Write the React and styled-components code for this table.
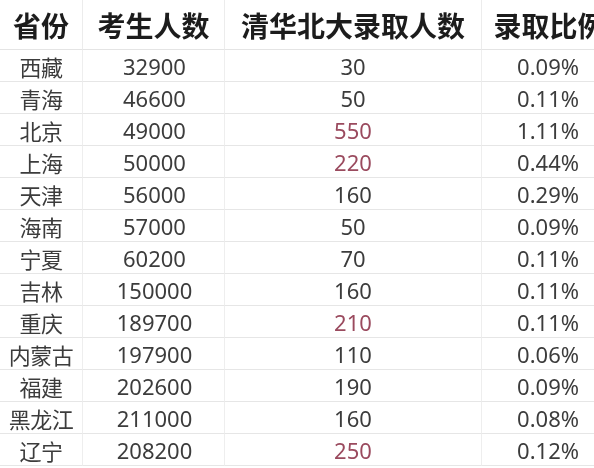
import React from "react";
import styled, { createGlobalStyle } from "styled-components";

const rows = [
  ["西藏", "32900", "30", "0.09%"],
  ["青海", "46600", "50", "0.11%"],
  ["北京", "49000", "550", "1.11%", true],
  ["上海", "50000", "220", "0.44%", true],
  ["天津", "56000", "160", "0.29%"],
  ["海南", "57000", "50", "0.09%"],
  ["宁夏", "60200", "70", "0.11%"],
  ["吉林", "150000", "160", "0.11%"],
  ["重庆", "189700", "210", "0.11%", true],
  ["内蒙古", "197900", "110", "0.06%"],
  ["福建", "202600", "190", "0.09%"],
  ["黑龙江", "211000", "160", "0.08%"],
  ["辽宁", "208200", "250", "0.12%", true],
];

const GlobalStyle = createGlobalStyle`
  html, body {
    margin: 0;
    padding: 0;
    background: #ffffff;
    overflow: hidden;
  }
`;

const Viewport = styled.div`
  width: 594px;
  height: 468px;
  overflow: hidden;
  background: #fff;
`;

const Sheet = styled.div`
  display: grid;
  grid-template-columns: 83px 142px 257px 136px;
  grid-template-rows: 50px;
  grid-auto-rows: 32px;
  width: 618px;
  font-family: "Noto Sans", "Noto Sans CJK SC", sans-serif;
  filter: blur(0.35px);
`;

const HeadCell = styled.div`
  box-sizing: border-box;
  display: flex;
  align-items: center;
  justify-content: center;
  font-family: "Noto Sans CJK SC", sans-serif;
  font-size: 28px;
  font-weight: 700;
  color: #1c1c1c;
  border-right: 1px solid #ececec;
  border-bottom: 1px solid #e4e4e4;
  white-space: nowrap;
  padding-top: 1px;
`;

const Cell = styled.div`
  box-sizing: border-box;
  display: flex;
  align-items: center;
  justify-content: ${(p) => (p.$align === "right" ? "flex-end" : "center")};
  padding-right: ${(p) => (p.$align === "right" ? "38px" : "0")};
  padding-left: ${(p) => (p.$shift ? `${p.$shift}px` : "0")};
  font-size: 22px;
  color: ${(p) => (p.$hot ? "#9a4a5e" : "#3c3c3c")};
  border-right: 1px solid #eeeeee;
  border-bottom: 1px solid #e6e6e6;
  white-space: nowrap;
  letter-spacing: ${(p) => (p.$cjk ? "-0.5px" : "0")};
`;

export default function App() {
  return (
    <Viewport>
      <GlobalStyle />
      <Sheet>
        <HeadCell>省份</HeadCell>
        <HeadCell>考生人数</HeadCell>
        <HeadCell>清华北大录取人数</HeadCell>
        <HeadCell>录取比例</HeadCell>
        {rows.map(([prov, total, admitted, ratio, hot]) => (
          <React.Fragment key={prov}>
            <Cell $cjk>{prov}</Cell>
            <Cell $shift={2}>{total}</Cell>
            <Cell $hot={hot}>{admitted}</Cell>
            <Cell $align="right">{ratio}</Cell>
          </React.Fragment>
        ))}
      </Sheet>
    </Viewport>
  );
}
